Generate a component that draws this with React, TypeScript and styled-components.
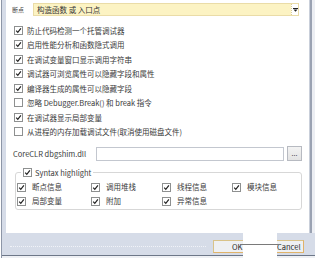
import React from "react";
import styled, { createGlobalStyle } from "styled-components";

const Global = createGlobalStyle`
  html, body { margin: 0; padding: 0; background: #ffffff; }
  body {
    width: 315px; height: 258px; overflow: hidden;
    font-family: "Noto Sans CJK SC", "Noto Sans", sans-serif;
    color: #3a3a3a;
  }
  * { box-sizing: border-box; }
`;

const Window = styled.div`
  position: relative;
  width: 314px;
  height: 258px;
  margin-left: 1px;
  border-left: 1px solid #8d96a7;
  background: #eef0f4;
  display: flex;
  flex-direction: column;
`;

const Body = styled.div`
  height: 233px;
  flex: none;
  display: flex;
  padding-left: 4px;
  background: #d6dce8;
`;

const Content = styled.div`
  flex: 1;
  background: #ffffff;
  display: flex;
  flex-direction: column;
`;

const RightEdge = styled.div`
  width: 6px;
  background: linear-gradient(to right, #c9cfda 0 1px, #9aa2b2 1px 3px, #eceef3 3px 6px);
`;

const ComboRow = styled.div`
  margin-top: 3px;
  height: 13px;
  display: flex;
  align-items: center;
  padding: 0 10px 0 6px;
`;

const SmallLabel = styled.span`
  width: 21px;
  font-size: 6px;
  line-height: 1;
  color: #444;
`;

const Combo = styled.div`
  flex: 1;
  height: 13px;
  display: flex;
  align-items: stretch;
  background: #fcf3c3;
  border: 1px solid #eadca7;
  padding-left: 3px;
`;

const ComboText = styled.span`
  flex: 1;
  font-size: 7.5px;
  line-height: 11px;
  color: #333;
  white-space: nowrap;
`;

const DropButton = styled.span`
  width: 7px;
  background: #ffffff;
  border-left: 1px dotted #d9cb9a;
  display: flex;
  align-items: center;
  justify-content: center;
`;

const OptionList = styled.div`
  margin-top: 7px;
  padding-left: 8px;
  display: flex;
  flex-direction: column;
`;

const OptionRow = styled.label`
  height: 14.5px;
  display: flex;
  align-items: center;
  gap: 4px;
  font-size: 7.5px;
  line-height: 1;
  white-space: nowrap;
`;

const Box = styled.span`
  width: 9px;
  height: 9px;
  flex: none;
  border: 1px solid #8e9090;
  background: #ffffff;
  display: flex;
  align-items: center;
  justify-content: center;
`;

const PathRow = styled.div`
  margin-top: 7px;
  height: 15px;
  display: flex;
  align-items: center;
  padding: 0 7px;
`;

const PathLabel = styled.span`
  width: 83px;
  font-size: 7.5px;
  line-height: 1;
  white-space: nowrap;
`;

const PathInput = styled.div`
  width: 188px;
  height: 14px;
  border: 1px solid #c3c7cf;
  background: #ffffff;
`;

const BrowseButton = styled.div`
  margin-left: 3px;
  width: 15px;
  height: 15px;
  border: 1px solid #b7bac1;
  background: linear-gradient(#f3f3f3, #e3e3e3);
  font-size: 7px;
  line-height: 1;
  color: #333;
  display: flex;
  align-items: flex-end;
  justify-content: center;
  padding-bottom: 3px;
`;

const Group = styled.fieldset`
  margin: 6px 7px 0 9px;
  padding: 2px 0 1px 1px;
  border: 1px solid #d7d7d7;
  border-radius: 3px;
  min-inline-size: 0;
`;

const Legend = styled.legend`
  margin-left: 4px;
  padding: 0 2px;
  height: 11px;
  display: flex;
  align-items: center;
  gap: 3px;
  font-size: 7.5px;
  line-height: 1;
  white-space: nowrap;
`;

const GroupGrid = styled.div`
  display: grid;
  grid-template-columns: 74px 71px 70px 1fr;
  grid-auto-rows: 14px;
  align-items: center;
`;

const GroupItem = styled.label`
  display: flex;
  align-items: center;
  gap: 6px;
  font-size: 7.5px;
  line-height: 1;
  white-space: nowrap;
`;

const Footer = styled.div`
  height: 23px;
  flex: none;
  background: #d6dce8;
  border-bottom: 1px solid #6d7788;
  display: flex;
  align-items: center;
  padding: 4px 11px 0 8px;
`;

const DottedRule = styled.div`
  flex: 1;
  height: 0;
  border-top: 1px dotted #f1f3f8;
  margin-right: 3px;
`;

const DialogButton = styled.div<{ $w: number; $pad: number }>`
  width: ${(p) => p.$w}px;
  height: 13px;
  margin-left: 4px;
  padding-left: ${(p) => p.$pad}px;
  border: 1px solid #d9c389;
  border-right-color: #e0b36a;
  border-bottom-color: #e0b36a;
  background: #eef0f3;
  font-size: 7.5px;
  line-height: 11px;
  color: #2a2a2a;
  &:first-of-type { margin-left: 0; }
`;

const Occluder = styled.div`
  position: absolute;
  left: 241px;
  top: 233px;
  width: 34px;
  height: 25px;
  background: #ffffff;
  &::after {
    content: "";
    position: absolute;
    left: -3px;
    right: -3px;
    top: 11px;
    height: 1px;
    background: #7a7a7a;
  }
`;

const Check = ({ on }: { on: boolean }) => (
  <Box>
    {on && (
      <svg width="7" height="7" viewBox="0 0 7 7">
        <path d="M1.2 3.6 L2.8 5.4 L5.9 1.3" fill="none" stroke="#222" strokeWidth="1.2" />
      </svg>
    )}
  </Box>
);

const options: [string, boolean][] = [
  ["防止代码检测一个托管调试器", true],
  ["启用性能分析和函数隐式调用", true],
  ["在调试变量窗口显示调用字符串", true],
  ["调试器可浏览属性可以隐藏字段和属性", true],
  ["编译器生成的属性可以隐藏字段", true],
  ["忽略 Debugger.Break() 和 break 指令", false],
  ["在调试器显示局部变量", true],
  ["从进程的内存加载调试文件(取消使用磁盘文件)", false],
];

const highlights = ["断点信息", "调用堆栈", "线程信息", "模块信息", "局部变量", "附加", "异常信息"];

export default function App() {
  return (
    <>
      <Global />
      <Window>
        <Body>
          <Content>
            <ComboRow>
              <SmallLabel>断点</SmallLabel>
              <Combo>
                <ComboText>构造函数 或 入口点</ComboText>
                <DropButton>
                  <svg width="5" height="4" viewBox="0 0 5 4">
                    <rect x="0" y="0" width="5" height="1" fill="#222" />
                    <path d="M0.5 1.5 H4.5 L2.5 3.8 Z" fill="#222" />
                  </svg>
                </DropButton>
              </Combo>
            </ComboRow>
            <OptionList>
              {options.map(([text, on]) => (
                <OptionRow key={text}>
                  <Check on={on} />
                  <span>{text}</span>
                </OptionRow>
              ))}
            </OptionList>
            <PathRow>
              <PathLabel>CoreCLR dbgshim.dll</PathLabel>
              <PathInput />
              <BrowseButton>...</BrowseButton>
            </PathRow>
            <Group>
              <Legend>
                <Check on={true} />
                <span>Syntax highlight</span>
              </Legend>
              <GroupGrid>
                {highlights.map((h) => (
                  <GroupItem key={h}>
                    <Check on={true} />
                    <span>{h}</span>
                  </GroupItem>
                ))}
              </GroupGrid>
            </Group>
          </Content>
          <RightEdge />
        </Body>
        <Footer>
          <DottedRule />
          <DialogButton $w={45} $pad={18}>OK</DialogButton>
          <DialogButton $w={42} $pad={14}>Cancel</DialogButton>
        </Footer>
        <Occluder />
      </Window>
    </>
  );
}
